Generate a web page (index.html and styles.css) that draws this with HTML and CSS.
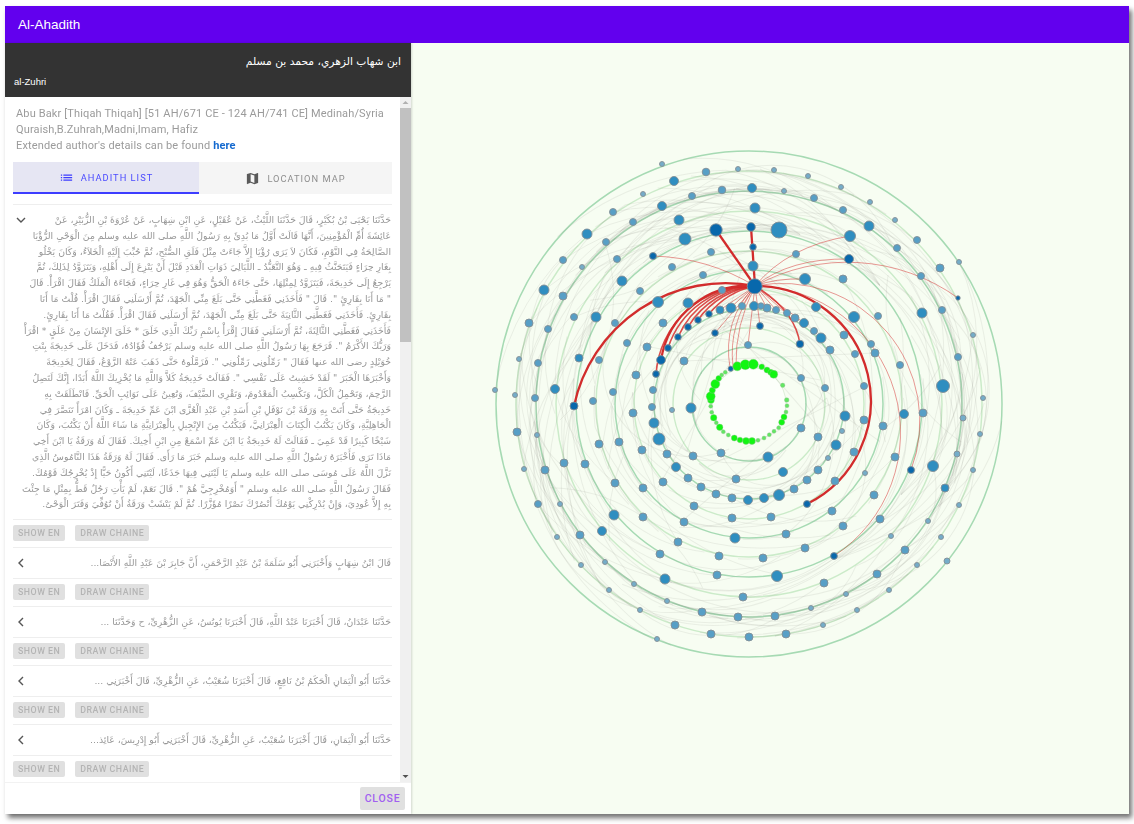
FILE: index.html
```html
<!DOCTYPE html>
<html lang="en">
<head>
<meta charset="utf-8">
<title>Al-Ahadith</title>
<link rel="stylesheet" href="styles.css">
</head>
<body>
<div class="window">
  <header class="appbar">Al-Ahadith</header>
  <div class="main">
    <aside class="side">
      <div class="author">
        <div class="author-ar" dir="rtl">ابن شهاب الزهري، محمد بن مسلم</div>
        <div class="author-en">al-Zuhri</div>
      </div>
      <div class="pane">
      <div class="scroll">
        <p class="desc">Abu Bakr [Thiqah Thiqah] [51 AH/671 CE - 124 AH/741 CE] Medinah/Syria<br>Quraish,B.Zuhrah,Madni,Imam, Hafiz<br>Extended author's details can be found <a class="link" href="#">here</a></p>
        <div class="tabs">
          <div class="tab active"><svg class="tab-icon" viewBox="0 0 24 24"><path d="M3 13h2v-2H3v2zm0 4h2v-2H3v2zm0-8h2V7H3v2zm4 4h14v-2H7v2zm0 4h14v-2H7v2zM7 7v2h14V7H7z"/></svg>AHADITH LIST</div>
          <div class="tab"><svg class="tab-icon" viewBox="0 0 24 24"><path d="M20.5 3l-.16.03L15 5.1 9 3 3.36 4.9c-.21.07-.36.25-.36.48V20.5c0 .28.22.5.5.5l.16-.03L9 18.9l6 2.1 5.64-1.9c.21-.07.36-.25.36-.48V3.5c0-.28-.22-.5-.5-.5zM15 19l-6-2.11V5l6 2.11V19z"/></svg>LOCATION MAP</div>
        </div>
        <div class="list">
          <div class="open-row">
            <svg class="chev-down" viewBox="0 0 12 12"><path d="M2 4l4 4 4-4"/></svg>
            <div class="hadith" dir="rtl">
              <div>حَدَّثَنَا يَحْيَى بْنُ بُكَيْرٍ، قَالَ حَدَّثَنَا اللَّيْثُ، عَنْ عُقَيْلٍ، عَنِ ابْنِ شِهَابٍ، عَنْ عُرْوَةَ بْنِ الزُّبَيْرِ، عَنْ</div>
              <div>عَائِشَةَ أُمِّ الْمُؤْمِنِينَ، أَنَّهَا قَالَتْ أَوَّلُ مَا بُدِئَ بِهِ رَسُولُ اللَّهِ صلى الله عليه وسلم مِنَ الْوَحْىِ الرُّؤْيَا</div>
              <div>الصَّالِحَةُ فِي النَّوْمِ، فَكَانَ لاَ يَرَى رُؤْيَا إِلاَّ جَاءَتْ مِثْلَ فَلَقِ الصُّبْحِ، ثُمَّ حُبِّبَ إِلَيْهِ الْخَلاَءُ، وَكَانَ يَخْلُو</div>
              <div>بِغَارِ حِرَاءٍ فَيَتَحَنَّثُ فِيهِ ـ وَهُوَ التَّعَبُّدُ ـ اللَّيَالِيَ ذَوَاتِ الْعَدَدِ قَبْلَ أَنْ يَنْزِعَ إِلَى أَهْلِهِ، وَيَتَزَوَّدُ لِذَلِكَ، ثُمَّ</div>
              <div>يَرْجِعُ إِلَى خَدِيجَةَ، فَيَتَزَوَّدُ لِمِثْلِهَا، حَتَّى جَاءَهُ الْحَقُّ وَهُوَ فِي غَارِ حِرَاءٍ، فَجَاءَهُ الْمَلَكُ فَقَالَ اقْرَأْ. قَالَ</div>
              <div>" مَا أَنَا بِقَارِئٍ ". قَالَ " فَأَخَذَنِي فَغَطَّنِي حَتَّى بَلَغَ مِنِّي الْجَهْدَ، ثُمَّ أَرْسَلَنِي فَقَالَ اقْرَأْ. قُلْتُ مَا أَنَا</div>
              <div>بِقَارِئٍ. فَأَخَذَنِي فَغَطَّنِي الثَّانِيَةَ حَتَّى بَلَغَ مِنِّي الْجَهْدَ، ثُمَّ أَرْسَلَنِي فَقَالَ اقْرَأْ. فَقُلْتُ مَا أَنَا بِقَارِئٍ.</div>
              <div>فَأَخَذَنِي فَغَطَّنِي الثَّالِثَةَ، ثُمَّ أَرْسَلَنِي فَقَالَ إِقْرَأْ بِاسْمِ رَبِّكَ الَّذِي خَلَقَ * خَلَقَ الإِنْسَانَ مِنْ عَلَقٍ * اقْرَأْ</div>
              <div>وَرَبُّكَ الأَكْرَمُ ". فَرَجَعَ بِهَا رَسُولُ اللَّهِ صلى الله عليه وسلم يَرْجُفُ فُؤَادُهُ، فَدَخَلَ عَلَى خَدِيجَةَ بِنْتِ</div>
              <div>خُوَيْلِدٍ رضى الله عنها فَقَالَ " زَمِّلُونِي زَمِّلُونِي ". فَزَمَّلُوهُ حَتَّى ذَهَبَ عَنْهُ الرَّوْعُ، فَقَالَ لِخَدِيجَةَ</div>
              <div>وَأَخْبَرَهَا الْخَبَرَ " لَقَدْ خَشِيتُ عَلَى نَفْسِي ". فَقَالَتْ خَدِيجَةُ كَلاَّ وَاللَّهِ مَا يُخْزِيكَ اللَّهُ أَبَدًا، إِنَّكَ لَتَصِلُ</div>
              <div>الرَّحِمَ، وَتَحْمِلُ الْكَلَّ، وَتَكْسِبُ الْمَعْدُومَ، وَتَقْرِي الضَّيْفَ، وَتُعِينُ عَلَى نَوَائِبِ الْحَقِّ. فَانْطَلَقَتْ بِهِ</div>
              <div>خَدِيجَةُ حَتَّى أَتَتْ بِهِ وَرَقَةَ بْنَ نَوْفَلِ بْنِ أَسَدِ بْنِ عَبْدِ الْعُزَّى ابْنَ عَمِّ خَدِيجَةَ ـ وَكَانَ امْرَأً تَنَصَّرَ فِي</div>
              <div>الْجَاهِلِيَّةِ، وَكَانَ يَكْتُبُ الْكِتَابَ الْعِبْرَانِيَّ، فَيَكْتُبُ مِنَ الإِنْجِيلِ بِالْعِبْرَانِيَّةِ مَا شَاءَ اللَّهُ أَنْ يَكْتُبَ، وَكَانَ</div>
              <div>شَيْخًا كَبِيرًا قَدْ عَمِيَ ـ فَقَالَتْ لَهُ خَدِيجَةُ يَا ابْنَ عَمِّ اسْمَعْ مِنِ ابْنِ أَخِيكَ. فَقَالَ لَهُ وَرَقَةُ يَا ابْنَ أَخِي</div>
              <div>مَاذَا تَرَى فَأَخْبَرَهُ رَسُولُ اللَّهِ صلى الله عليه وسلم خَبَرَ مَا رَأَى. فَقَالَ لَهُ وَرَقَةُ هَذَا النَّامُوسُ الَّذِي</div>
              <div>نَزَّلَ اللَّهُ عَلَى مُوسَى صلى الله عليه وسلم يَا لَيْتَنِي فِيهَا جَذَعًا، لَيْتَنِي أَكُونُ حَيًّا إِذْ يُخْرِجُكَ قَوْمُكَ.</div>
              <div>فَقَالَ رَسُولُ اللَّهِ صلى الله عليه وسلم " أَوَمُخْرِجِيَّ هُمْ ". قَالَ نَعَمْ، لَمْ يَأْتِ رَجُلٌ قَطُّ بِمِثْلِ مَا جِئْتَ</div>
              <div>بِهِ إِلاَّ عُودِيَ، وَإِنْ يُدْرِكْنِي يَوْمُكَ أَنْصُرْكَ نَصْرًا مُؤَزَّرًا. ثُمَّ لَمْ يَنْشَبْ وَرَقَةُ أَنْ تُوُفِّيَ وَفَتَرَ الْوَحْىُ.</div>
            </div>
          </div>
          <div class="actions"><span class="btn">SHOW EN</span><span class="btn">DRAW CHAINE</span></div>
          <div class="row"><svg class="chev" viewBox="0 0 12 12"><path d="M8 2L4 6l4 4"/></svg><div class="row-text" dir="rtl">قَالَ ابْنُ شِهَابٍ وَأَخْبَرَنِي أَبُو سَلَمَةَ بْنُ عَبْدِ الرَّحْمَنِ، أَنَّ جَابِرَ بْنَ عَبْدِ اللَّهِ الأَنْصَا...</div></div>
          <div class="actions"><span class="btn">SHOW EN</span><span class="btn">DRAW CHAINE</span></div>
          <div class="row"><svg class="chev" viewBox="0 0 12 12"><path d="M8 2L4 6l4 4"/></svg><div class="row-text" dir="rtl">حَدَّثَنَا عَبْدَانُ، قَالَ أَخْبَرَنَا عَبْدُ اللَّهِ، قَالَ أَخْبَرَنَا يُونُسُ، عَنِ الزُّهْرِيِّ، ح وَحَدَّثَنَا ...</div></div>
          <div class="actions"><span class="btn">SHOW EN</span><span class="btn">DRAW CHAINE</span></div>
          <div class="row"><svg class="chev" viewBox="0 0 12 12"><path d="M8 2L4 6l4 4"/></svg><div class="row-text" dir="rtl">حَدَّثَنَا أَبُو الْيَمَانِ الْحَكَمُ بْنُ نَافِعٍ، قَالَ أَخْبَرَنَا شُعَيْبٌ، عَنِ الزُّهْرِيِّ، قَالَ أَخْبَرَنِي ...</div></div>
          <div class="actions"><span class="btn">SHOW EN</span><span class="btn">DRAW CHAINE</span></div>
          <div class="row"><svg class="chev" viewBox="0 0 12 12"><path d="M8 2L4 6l4 4"/></svg><div class="row-text" dir="rtl">حَدَّثَنَا أَبُو الْيَمَانِ، قَالَ أَخْبَرَنَا شُعَيْبٌ، عَنِ الزُّهْرِيِّ، قَالَ أَخْبَرَنِي أَبُو إِدْرِيسَ، عَائِذ...</div></div>
          <div class="actions"><span class="btn">SHOW EN</span><span class="btn">DRAW CHAINE</span></div>
        </div>
      </div>
      <div class="vbar">
        <svg class="arrow" viewBox="0 0 11 11"><path class="arrow-up" d="M2.5 7L5.5 4l3 3z"/></svg>
        <div class="track"><div class="thumb"></div></div>
        <svg class="arrow" viewBox="0 0 11 11"><path class="arrow-down" d="M2.5 4l3 3 3-3z"/></svg>
      </div>
      </div>
      <div class="foot"><span class="close">CLOSE</span></div>
    </aside>
    <section class="chart">
      <svg class="graph" viewBox="411 43 718 771" width="718" height="771">
        <g class="rings">
          <circle class="rd" cx="749" cy="404" r="253"/><circle class="rl" cx="749" cy="404" r="233"/><circle class="rd" cx="749" cy="404" r="213"/><circle class="rl" cx="749" cy="404" r="193"/><circle class="rd" cx="749" cy="404" r="173"/><circle class="rl" cx="749" cy="404" r="153"/><circle class="rd" cx="749" cy="404" r="134"/><circle class="rl" cx="749" cy="404" r="115"/><circle class="rd" cx="749" cy="404" r="95"/><circle class="rl" cx="749" cy="404" r="76"/><circle class="rd" cx="749" cy="404" r="57"/><circle class="core" cx="749" cy="404" r="37"/>
        </g>
        <g class="links" id="links">
          <path d="M587 234A230 230 0 0 1 779 230"/><path d="M606 242A210 210 0 0 1 716 230"/><path d="M563 260A240 240 0 0 1 779 230"/><path d="M613 212A220 220 0 0 1 751 227"/><path d="M617 259A200 200 0 0 1 779 230"/><path d="M633 222A190 190 0 0 1 850 236"/><path d="M562 296A230 230 0 0 1 716 230"/><path d="M544 290A240 240 0 0 1 685 239"/><path d="M622 281A180 180 0 0 1 779 230"/><path d="M529 323A250 250 0 0 1 685 239"/><path d="M548 329A210 210 0 0 1 663 207"/><path d="M574 317A170 170 0 0 1 658 302"/><path d="M539 363A260 260 0 0 1 685 239"/><path d="M555 389A200 200 0 0 1 622 281"/><path d="M579 358A190 190 0 0 1 617 259"/><path d="M596 317A200 200 0 0 1 716 230"/><path d="M599 360A180 180 0 0 1 716 252"/><path d="M615 323A170 170 0 0 1 779 230"/><path d="M627 343A150 150 0 0 1 703 275"/><path d="M647 347A120 120 0 0 1 722 290"/><path d="M684 361A120 120 0 0 1 805 279"/><path d="M700 400A90 90 0 0 1 796 254"/><path d="M694 340A150 150 0 0 1 880 350"/><path d="M780 230A220 220 0 0 1 960 340"/><path d="M716 230A250 250 0 0 1 945 300"/><path d="M779 230A190 190 0 0 1 922 314"/><path d="M850 236A150 150 0 0 1 942 310"/><path d="M869 226A180 180 0 0 1 973 335"/><path d="M843 210A210 210 0 0 1 958 357"/><path d="M814 198A220 220 0 0 1 943 386"/><path d="M897 248A150 150 0 0 1 958 357"/><path d="M921 276A130 130 0 0 1 945 488"/><path d="M943 386A100 100 0 0 1 933 466"/><path d="M959 262A200 200 0 0 1 963 418"/><path d="M958 357A150 150 0 0 1 927 521"/><path d="M973 335A210 210 0 0 1 945 488"/><path d="M963 418A130 130 0 0 1 904 550"/><path d="M933 466A90 90 0 0 1 877 574"/><path d="M945 488A130 130 0 0 1 846 594"/><path d="M980 434A260 260 0 0 1 857 610"/><path d="M957 454A240 240 0 0 1 811 608"/><path d="M904 550A120 120 0 0 1 786 634"/><path d="M877 574A220 220 0 0 1 702 612"/><path d="M833 556A180 180 0 0 1 664 579"/><path d="M805 548A150 150 0 0 1 660 554"/><path d="M880 519A250 250 0 0 1 642 517"/><path d="M894 457A220 220 0 0 1 684 522"/><path d="M836 445A140 140 0 0 1 694 506"/><path d="M800 428A100 100 0 0 1 688 478"/><path d="M768 457A70 70 0 0 1 701 487"/><path d="M864 420A170 170 0 0 1 716 494"/><path d="M664 579A220 220 0 0 1 538 504"/><path d="M602 531A180 180 0 0 1 529 323"/><path d="M615 483A170 170 0 0 1 555 389"/><path d="M580 535A210 210 0 0 1 517 432"/><path d="M640 610A260 260 0 0 1 524 469"/><path d="M667 601A230 230 0 0 1 545 470"/><path d="M660 554A190 190 0 0 1 564 463"/><path d="M642 517A170 170 0 0 1 599 444"/><path d="M643 488A130 130 0 0 1 619 442"/><path d="M684 522A140 140 0 0 1 633 413"/><path d="M678 542A160 160 0 0 1 654 423"/><path d="M721 453A70 70 0 0 1 692 408"/><path d="M736 479A90 90 0 0 1 660 439"/><path d="M642 450A110 110 0 0 1 702 275"/><path d="M653 390A120 120 0 0 1 722 290"/><path d="M519 359A250 250 0 0 1 662 206"/><path d="M495 390A260 260 0 0 1 587 234"/><path d="M534 398A230 230 0 0 1 633 222"/><path d="M580 565A240 240 0 0 1 536 435"/><path d="M608 590A250 250 0 0 1 538 504"/><path d="M674 625A240 240 0 0 1 560 504"/><path d="M802 378A50 50 0 0 0 720 330"/><path d="M825 388A80 80 0 0 0 700 330"/><path d="M865 386A120 120 0 0 0 670 350"/><path d="M684 361L875 353"/><path d="M748 345A60 60 0 0 1 825 388"/><path d="M640 345L820 380"/><path d="M605 243A170 170 0 0 1 560 420"/><path d="M633 222A210 210 0 0 0 555 389"/>
        </g>
        <use href="#links" transform="rotate(38 749 404)"/>
        <use href="#links" transform="rotate(-71 749 404)"/>
        <use href="#links" transform="rotate(142 749 404)"/>
        <g class="red-thin">
          <path d="M755 286A210 210 0 0 0 653 256"/><path d="M755 286Q788 246 850 236"/><path d="M755 286Q790 258 849 259"/><path d="M755 286A190 190 0 0 1 958 298"/><path d="M755 286Q775 278 805 279"/><path d="M755 286A147 147 0 0 1 834 556"/><path d="M755 286A138 138 0 0 1 911 470"/><path d="M755 286L730 308"/><path d="M755 286L720 310"/><path d="M755 286Q722 320 730 368"/><path d="M755 286Q728 325 733 366"/><path d="M755 286Q735 325 736 366"/><path d="M755 286L748 345"/><path d="M755 286L715 333"/><path d="M755 286L760 326"/><path d="M755 286L767 308"/><path d="M755 286L786 313"/><path d="M755 286L804 323"/><path d="M755 286L776 310"/><path d="M755 286L742 306"/>
        </g>
        <g class="red-mid">
          <path d="M755 286A80 80 0 0 0 709 314"/><path d="M755 286A80 80 0 0 0 698 320"/><path d="M755 286A85 85 0 0 0 688 327"/><path d="M755 286A85 85 0 0 0 678 337"/><path d="M755 286A90 90 0 0 0 668 348"/><path d="M755 286A95 95 0 0 0 656 374"/><path d="M755 286Q795 310 800 344"/>
        </g>
        <g class="red-thick">
          <path d="M755 286L716 230"/><path d="M755 286L751 227"/><path d="M755 286A155 155 0 0 0 574 406"/><path d="M755 286A115 115 0 0 1 807 504"/><path d="M755 286A88 88 0 0 0 661 360"/>
        </g>
        <g class="nodes">
          <circle class="s" cx="662" cy="164" r="2.5"/><circle class="m" cx="706" cy="172" r="3.8"/><circle class="s" cx="738" cy="169" r="2.5"/><circle class="b" cx="674" cy="181" r="4.5"/><circle class="b" cx="752" cy="188" r="4.5"/><circle class="m" cx="722" cy="190" r="3.8"/><circle class="m" cx="692" cy="196" r="3.5"/><circle class="s" cx="643" cy="194" r="2.5"/><circle class="b" cx="662" cy="206" r="4.5"/><circle class="b" cx="755" cy="208" r="5"/><circle class="m" cx="613" cy="212" r="3.5"/><circle class="m" cx="633" cy="222" r="3.5"/><circle class="b" cx="679" cy="220" r="5"/><circle class="d" cx="716" cy="230" r="6.2"/><circle class="d" cx="751" cy="227" r="4.3"/><circle class="b" cx="685" cy="239" r="6"/><circle class="b" cx="587" cy="234" r="5"/><circle class="m" cx="606" cy="242" r="3.5"/><circle class="m" cx="563" cy="260" r="3.5"/><circle class="d" cx="753" cy="247" r="3.3"/><circle class="m" cx="711" cy="252" r="3.5"/><circle class="m" cx="617" cy="259" r="3.5"/><circle class="d" cx="653" cy="256" r="3.5"/><circle class="m" cx="672" cy="267" r="3.5"/><circle class="s" cx="582" cy="267" r="2.5"/><circle class="b" cx="753" cy="266" r="5"/><circle class="m" cx="703" cy="275" r="3.5"/><circle class="b" cx="622" cy="281" r="5"/><circle class="b" cx="544" cy="290" r="5"/><circle class="m" cx="563" cy="296" r="4"/><circle class="m" cx="640" cy="291" r="3.5"/><circle class="m" cx="722" cy="290" r="3.5"/><circle class="b" cx="658" cy="302" r="5.5"/><circle class="b" cx="688" cy="303" r="5"/><circle class="b" cx="731" cy="308" r="5"/><circle class="m" cx="742" cy="306" r="3.5"/><circle class="b" cx="754" cy="306" r="4.5"/><circle class="b" cx="720" cy="310" r="4"/><circle class="d" cx="709" cy="314" r="3.3"/><circle class="d" cx="698" cy="320" r="3.3"/><circle class="d" cx="688" cy="327" r="3.4"/><circle class="d" cx="678" cy="337" r="3.3"/><circle class="d" cx="668" cy="348" r="3.4"/><circle class="d" cx="661" cy="360" r="4.4"/><circle class="d" cx="656" cy="374" r="3.4"/><circle class="m" cx="574" cy="317" r="3.5"/><circle class="b" cx="596" cy="317" r="5"/><circle class="m" cx="615" cy="323" r="3.5"/><circle class="m" cx="663" cy="323" r="4"/><circle class="m" cx="529" cy="323" r="4"/><circle class="m" cx="548" cy="329" r="3.5"/><circle class="m" cx="627" cy="343" r="3.5"/><circle class="m" cx="647" cy="347" r="4"/><circle class="s" cx="519" cy="359" r="2.5"/><circle class="m" cx="538" cy="363" r="3.5"/><circle class="b" cx="579" cy="358" r="4"/><circle class="m" cx="599" cy="360" r="3.5"/><circle class="m" cx="684" cy="361" r="4"/><circle class="d" cx="715" cy="333" r="3.3"/><circle class="m" cx="748" cy="345" r="3.5"/><circle class="d" cx="760" cy="326" r="3.4"/><circle class="m" cx="636" cy="375" r="4"/><circle class="m" cx="653" cy="390" r="3.5"/><circle class="b" cx="555" cy="389" r="4.5"/><circle class="m" cx="613" cy="392" r="3.5"/><circle class="s" cx="495" cy="390" r="2.5"/><circle class="s" cx="515" cy="395" r="2.5"/><circle class="m" cx="535" cy="398" r="3.5"/><circle class="m" cx="593" cy="401" r="3.5"/>
          <circle class="s" cx="774" cy="170" r="2.5"/><circle class="s" cx="808" cy="176" r="2.5"/><circle class="s" cx="841" cy="187" r="2.5"/><circle class="s" cx="784" cy="191" r="2.5"/><circle class="m" cx="814" cy="198" r="3.5"/><circle class="s" cx="870" cy="202" r="2.5"/><circle class="m" cx="843" cy="210" r="3.5"/><circle class="s" cx="895" cy="220" r="2.5"/><circle class="b" cx="869" cy="226" r="5"/><circle class="b" cx="779" cy="230" r="8"/><circle class="b" cx="850" cy="236" r="5.5"/><circle class="m" cx="917" cy="240" r="3.5"/><circle class="m" cx="897" cy="248" r="3.5"/><circle class="m" cx="796" cy="254" r="3.5"/><circle class="d" cx="849" cy="259" r="4.5"/><circle class="s" cx="959" cy="262" r="2.5"/><circle class="m" cx="940" cy="268" r="4"/><circle class="m" cx="921" cy="276" r="3.5"/><circle class="b" cx="805" cy="279" r="5.5"/><circle class="m" cx="843" cy="279" r="4"/><circle class="d" cx="958" cy="298" r="2.2"/><circle class="b" cx="816" cy="307" r="4.5"/><circle class="b" cx="854" cy="317" r="5.5"/><circle class="m" cx="878" cy="316" r="3.5"/><circle class="b" cx="922" cy="313" r="5"/><circle class="m" cx="942" cy="310" r="3.5"/><circle class="m" cx="767" cy="308" r="4"/><circle class="m" cx="761" cy="306" r="3.2"/><circle class="m" cx="776" cy="310" r="3.5"/><circle class="m" cx="787" cy="313" r="3.5"/><circle class="m" cx="795" cy="318" r="4"/><circle class="b" cx="804" cy="323" r="4.5"/><circle class="m" cx="814" cy="331" r="3.5"/><circle class="b" cx="821" cy="338" r="5"/><circle class="m" cx="830" cy="350" r="4"/><circle class="m" cx="844" cy="335" r="4"/><circle class="d" cx="800" cy="344" r="3.8"/><circle class="m" cx="871" cy="344" r="3.5"/><circle class="m" cx="875" cy="353" r="4"/><circle class="m" cx="855" cy="354" r="3.5"/><circle class="s" cx="973" cy="335" r="2.5"/><circle class="m" cx="958" cy="357" r="3.5"/><circle class="m" cx="900" cy="365" r="3.5"/><circle class="m" cx="801" cy="378" r="3.5"/><circle class="m" cx="825" cy="388" r="3.5"/><circle class="m" cx="864" cy="386" r="3.5"/><circle class="b" cx="943" cy="386" r="6.5"/><circle class="s" cx="983" cy="398" r="2.5"/>
          <circle class="d" cx="574" cy="406" r="4"/><circle class="m" cx="633" cy="413" r="4"/><circle class="m" cx="652" cy="407" r="3.5"/><circle class="s" cx="672" cy="410" r="2.5"/><circle class="b" cx="691" cy="408" r="5"/><circle class="b" cx="654" cy="423" r="5"/><circle class="m" cx="517" cy="432" r="4"/><circle class="s" cx="537" cy="435" r="2.5"/><circle class="b" cx="659" cy="439" r="6"/><circle class="m" cx="599" cy="444" r="4"/><circle class="m" cx="619" cy="442" r="4"/><circle class="m" cx="642" cy="450" r="4"/><circle class="m" cx="667" cy="454" r="4"/><circle class="m" cx="693" cy="456" r="4"/><circle class="m" cx="721" cy="453" r="4"/><circle class="m" cx="564" cy="463" r="4"/><circle class="m" cx="585" cy="464" r="4"/><circle class="s" cx="524" cy="469" r="2.5"/><circle class="m" cx="545" cy="470" r="4"/><circle class="b" cx="676" cy="467" r="4.5"/><circle class="m" cx="688" cy="478" r="4"/><circle class="m" cx="736" cy="479" r="4"/><circle class="m" cx="615" cy="483" r="4"/><circle class="m" cx="663" cy="482" r="4"/><circle class="m" cx="643" cy="488" r="4"/><circle class="m" cx="701" cy="487" r="4"/><circle class="m" cx="716" cy="494" r="4"/><circle class="m" cx="732" cy="498" r="4"/><circle class="b" cx="748" cy="500" r="4.5"/><circle class="m" cx="538" cy="504" r="3.5"/><circle class="s" cx="560" cy="504" r="2.5"/><circle class="m" cx="694" cy="506" r="4"/><circle class="b" cx="614" cy="515" r="5"/><circle class="m" cx="643" cy="517" r="4"/><circle class="m" cx="684" cy="522" r="4"/><circle class="m" cx="732" cy="518" r="4"/><circle class="s" cx="557" cy="537" r="2.5"/><circle class="m" cx="580" cy="535" r="4"/><circle class="b" cx="602" cy="531" r="4.5"/><circle class="m" cx="678" cy="542" r="4"/><circle class="b" cx="735" cy="538" r="5"/><circle class="m" cx="660" cy="554" r="4"/><circle class="m" cx="719" cy="556" r="4"/><circle class="s" cx="581" cy="565" r="2.5"/><circle class="s" cx="605" cy="562" r="2.5"/><circle class="m" cx="717" cy="575" r="4"/><circle class="b" cx="665" cy="579" r="5"/><circle class="s" cx="634" cy="584" r="2.5"/><circle class="s" cx="609" cy="590" r="2.5"/><circle class="m" cx="743" cy="597" r="4"/><circle class="s" cx="667" cy="601" r="2.5"/><circle class="s" cx="640" cy="610" r="2.5"/><circle class="m" cx="702" cy="612" r="4"/><circle class="m" cx="738" cy="617" r="4"/><circle class="m" cx="675" cy="625" r="4"/><circle class="m" cx="711" cy="634" r="4"/><circle class="m" cx="749" cy="637" r="4"/><circle class="s" cx="657" cy="639" r="2.5"/>
          <circle class="b" cx="845" cy="416" r="5"/><circle class="m" cx="864" cy="420" r="4"/><circle class="b" cx="904" cy="414" r="4.5"/><circle class="m" cx="923" cy="413" r="4"/><circle class="s" cx="963" cy="418" r="3"/><circle class="m" cx="883" cy="426" r="4"/><circle class="m" cx="801" cy="428" r="4"/><circle class="m" cx="818" cy="437" r="4"/><circle class="s" cx="842" cy="431" r="2.5"/><circle class="s" cx="980" cy="434" r="2.5"/><circle class="b" cx="836" cy="445" r="5"/><circle class="m" cx="854" cy="452" r="4"/><circle class="s" cx="957" cy="454" r="3"/><circle class="m" cx="895" cy="457" r="4"/><circle class="b" cx="768" cy="457" r="5"/><circle class="s" cx="828" cy="458" r="2.5"/><circle class="b" cx="933" cy="466" r="5.5"/><circle class="s" cx="973" cy="470" r="2.5"/><circle class="d" cx="911" cy="470" r="3.5"/><circle class="m" cx="818" cy="470" r="4"/><circle class="b" cx="783" cy="472" r="4.5"/><circle class="s" cx="865" cy="473" r="2.5"/><circle class="m" cx="807" cy="480" r="4"/><circle class="m" cx="835" cy="481" r="4"/><circle class="m" cx="794" cy="489" r="4"/><circle class="b" cx="945" cy="488" r="4"/><circle class="m" cx="874" cy="495" r="4"/><circle class="b" cx="779" cy="495" r="5.5"/><circle class="b" cx="764" cy="498" r="4.5"/><circle class="d" cx="807" cy="504" r="3.5"/><circle class="s" cx="959" cy="505" r="2.5"/><circle class="m" cx="832" cy="511" r="4"/><circle class="m" cx="771" cy="517" r="4"/><circle class="m" cx="880" cy="519" r="4"/><circle class="s" cx="928" cy="521" r="2.5"/><circle class="m" cx="843" cy="526" r="4"/><circle class="m" cx="786" cy="534" r="4"/><circle class="s" cx="891" cy="536" r="2.5"/><circle class="s" cx="941" cy="537" r="2.5"/><circle class="m" cx="805" cy="548" r="4"/><circle class="m" cx="905" cy="550" r="4"/><circle class="d" cx="834" cy="556" r="3.4"/><circle class="m" cx="763" cy="558" r="4"/><circle class="s" cx="947" cy="561" r="3"/><circle class="s" cx="917" cy="565" r="2.5"/><circle class="b" cx="777" cy="576" r="5.5"/><circle class="m" cx="877" cy="574" r="4"/><circle class="m" cx="824" cy="583" r="4"/><circle class="s" cx="889" cy="590" r="2.5"/><circle class="s" cx="846" cy="594" r="2.5"/><circle class="s" cx="811" cy="608" r="2.5"/><circle class="s" cx="857" cy="610" r="2.5"/><circle class="m" cx="775" cy="616" r="4"/><circle class="m" cx="786" cy="634" r="4"/><circle class="s" cx="823" cy="625" r="2.5"/>
          <circle class="d" cx="754.7" cy="286.3" r="7.5"/>
          <circle class="d" cx="730.7" cy="368.7" r="2.6"/>
        </g>
        <g class="greens">
          <circle class="gs" cx="782.7" cy="385.3" r="2.2"/><circle class="gs" cx="786.7" cy="400" r="2.3"/><circle class="gs" cx="787" cy="405.7" r="2"/><circle class="gs" cx="786" cy="412" r="2"/><circle class="g" cx="784" cy="417" r="3"/><circle class="g" cx="781.7" cy="422.3" r="3"/><circle class="gs" cx="778.7" cy="427.7" r="2"/><circle class="gs" cx="774" cy="431.3" r="2"/><circle class="gs" cx="769.3" cy="434.7" r="2"/><circle class="gs" cx="764" cy="438" r="2"/><circle class="gs" cx="758" cy="440.3" r="2"/><circle class="g" cx="752" cy="441" r="3.4"/><circle class="g" cx="746" cy="441" r="3.4"/><circle class="g" cx="740" cy="440" r="2.8"/><circle class="g" cx="734.3" cy="438" r="3"/><circle class="gs" cx="728.3" cy="435" r="2"/><circle class="gs" cx="723.3" cy="431.7" r="2"/><circle class="g" cx="719.7" cy="427.3" r="3.2"/><circle class="gs" cx="716.3" cy="422.7" r="2"/><circle class="g" cx="713.7" cy="417.7" r="3.2"/><circle class="gs" cx="711.7" cy="412.3" r="2"/><circle class="gs" cx="710.7" cy="406.3" r="2"/><circle class="g" cx="711" cy="400" r="3.4"/><circle class="g" cx="710.7" cy="396.3" r="4.5"/><circle class="g" cx="712.3" cy="390.3" r="3"/><circle class="g" cx="715.3" cy="384" r="4.5"/><circle class="g" cx="718.7" cy="378.3" r="2.8"/><circle class="gs" cx="721.7" cy="375" r="2"/><circle class="gs" cx="725.3" cy="372.3" r="2"/><circle class="g" cx="737.3" cy="366.3" r="4.5"/><circle class="g" cx="745.3" cy="364.7" r="5"/><circle class="g" cx="753.3" cy="364.3" r="5"/><circle class="g" cx="761.7" cy="366.7" r="2.8"/><circle class="g" cx="767" cy="370" r="3"/><circle class="g" cx="770.7" cy="372.3" r="3"/><circle class="g" cx="773.7" cy="374.3" r="4"/>
        </g>
      </svg>
    </section>
  </div>
</div>
</body>
</html>
```
FILE: styles.css
```css
* { box-sizing: border-box; }
html, body { margin: 0; height: 100%; background: #fff; overflow: hidden; }
body { padding: 6px 5px 10px; font-family: Roboto, "Liberation Sans", sans-serif; }

.window {
  width: 1124px;
  height: 808px;
  display: flex;
  flex-direction: column;
  background: #fff;
  box-shadow: 3px 4px 5px rgba(0, 0, 0, .55);
  filter: blur(.4px);
}
.appbar {
  height: 37px;
  flex: none;
  display: flex;
  align-items: center;
  padding-left: 13px;
  background: #6200ee;
  color: #fff;
  font: 13.5px "Liberation Sans", Arial, sans-serif;
}
.main { flex: 1; display: flex; min-height: 0; }

.side {
  width: 406px;
  flex: none;
  min-height: 0;
  display: flex;
  flex-direction: column;
  background: #fff;
  box-shadow: 1px 0 2px rgba(0, 0, 0, .15);
  z-index: 1;
}
.author {
  height: 54px;
  flex: none;
  padding: 9px 10px 0 9px;
  background: #333;
  color: #fff;
}
.author-ar { font: 10.7px/20px "DejaVu Sans", serif; white-space: nowrap; }
.author-en { margin-top: 4px; font: 9.5px/12px "Liberation Sans", Arial, sans-serif; }

.pane { flex: 1; min-height: 0; display: flex; }
.scroll {
  flex: 1;
  min-width: 0;
  overflow: hidden;
  padding: 9px 8px 0;
}
.vbar { width: 11px; flex: none; display: flex; flex-direction: column; background: #f0f0f0; }
.arrow { width: 11px; height: 11px; flex: none; display: block; }
.arrow-up { fill: #b0b0b0; }
.arrow-down { fill: #505050; }
.track { flex: 1; min-height: 0; }
.thumb { height: 234px; background: #c1c1c1; }

.desc {
  margin: 0 0 8px 3px;
  font-size: 11px;
  line-height: 16px;
  letter-spacing: .14px;
  color: #9b9b9b;
  white-space: nowrap;
}
.link { color: #1469cf; font-weight: 700; text-decoration: none; }

.tabs { display: flex; width: 379px; height: 32px; background: #f5f5f5; }
.tab {
  flex: 193;
  display: flex;
  align-items: center;
  justify-content: center;
  gap: 7px;
  font-size: 9.3px;
  letter-spacing: 1px;
  color: #8e8e8e;
}
.tab.active {
  flex: 186;
  color: #4a4aff;
  background: #e6e6f3;
  border-bottom: 2px solid #3d3dff;
}
.tab-icon { width: 15px; height: 15px; fill: #5a5a5a; }
.tab.active .tab-icon { fill: #3d3dff; }

.list { width: 379px; margin-top: 10px; border-top: 1px solid #eee; }
.open-row { display: flex; height: 315px; padding: 7px 1px 0 0; border-bottom: 1px solid #eee; }
.chev-down { width: 12px; height: 12px; margin: 2px 0 0 2px; flex: none; }
.chev-down path, .chev path { fill: none; stroke: #555; stroke-width: 1.4; }
.hadith {
  flex: 1;
  min-width: 0;
  font: 9.3px/15.8px "DejaVu Sans", serif;
  color: #969696;
  white-space: nowrap;
}
.actions {
  height: 28px;
  display: flex;
  align-items: center;
  gap: 10px;
  padding-bottom: 2px;
  border-bottom: 1px solid #eee;
}
.btn {
  height: 16px;
  padding: 0 5px;
  display: flex;
  align-items: center;
  background: #e0e0e0;
  border-radius: 2px;
  color: #b4b4b4;
  font-size: 8.8px;
  letter-spacing: .5px;
  font-weight: 500;
}
.row {
  height: 31px;
  display: flex;
  align-items: center;
  padding-right: 1px;
  border-bottom: 1px solid #eee;
}
.chev { width: 12px; height: 12px; margin-left: 2px; flex: none; }
.row-text {
  flex: 1;
  font: 9.3px/16px "DejaVu Sans", serif;
  color: #969696;
  white-space: nowrap;
}

.foot {
  height: 32px;
  flex: none;
  display: flex;
  justify-content: flex-end;
  align-items: flex-start;
  padding: 4px 6px 0 0;
  border-top: 1px solid #f2f2f2;
}
.close {
  width: 45px;
  height: 23px;
  display: flex;
  align-items: center;
  justify-content: center;
  background: #e0e0e0;
  border-radius: 2px;
  color: #a15ff0;
  font-size: 10.5px;
  font-weight: 500;
  letter-spacing: .8px;
}

.chart { flex: 1; background: #f7fdf2; min-width: 0; }
.graph { display: block; }
.rings circle { fill: none; }
.rd { stroke: #a6dab3; stroke-width: 1.5; }
.rl { stroke: #cbebc9; stroke-width: 1.5; }
.rings .core { fill: #fcfffa; stroke: #c9e3c4; stroke-width: .6; }
.links path { fill: none; stroke: rgba(130, 130, 125, .12); stroke-width: 1; }
.red-thin path { fill: none; stroke: rgba(214, 50, 50, .5); stroke-width: 1; }
.red-mid path { fill: none; stroke: rgba(212, 32, 32, .8); stroke-width: 1.6; }
.red-thick path { fill: none; stroke: #d22c2c; stroke-width: 2.3; }
.nodes circle { stroke: #858f95; stroke-width: .9; }
.nodes .s { fill: #74adc9; }
.nodes .m { fill: #579fc6; }
.nodes .b { fill: #2f8ec0; }
.nodes .d { fill: #0868ac; }
.greens circle { stroke: #8fbf8f; stroke-width: .4; }
.greens .g { fill: #12f612; }
.greens .gs { fill: #63e663; }
```
